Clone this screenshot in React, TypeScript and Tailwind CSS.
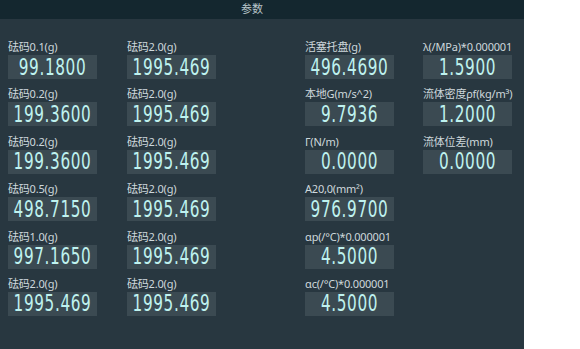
const leftRows = [
  ["砝码0.1(g)", "99.1800", "砝码2.0(g)", "1995.469"],
  ["砝码0.2(g)", "199.3600", "砝码2.0(g)", "1995.469"],
  ["砝码0.2(g)", "199.3600", "砝码2.0(g)", "1995.469"],
  ["砝码0.5(g)", "498.7150", "砝码2.0(g)", "1995.469"],
  ["砝码1.0(g)", "997.1650", "砝码2.0(g)", "1995.469"],
  ["砝码2.0(g)", "1995.469", "砝码2.0(g)", "1995.469"],
];

const rightRows: (string | null)[][] = [
  ["活塞托盘(g)", "496.4690", "λ(/MPa)*0.000001", "1.5900"],
  ["本地G(m/s^2)", "9.7936", "流体密度ρf(kg/m³)", "1.2000"],
  ["Γ(N/m)", "0.0000", "流体位差(mm)", "0.0000"],
  ["A20,0(mm²)", "976.9700", null, null],
  ["αp(/°C)*0.000001", "4.5000", null, null],
  ["αc(/°C)*0.000001", "4.5000", null, null],
];

function Field({ label, value }: { label: string; value: string }) {
  return (
    <div className="flex flex-col">
      <div className="h-[16px] text-[11px] leading-[16px] tracking-[-0.2px] text-[#ced8dc] whitespace-nowrap">{label}</div>
      <div className="h-[24px] w-[89px] bg-[#3b4a52] flex items-center justify-center">
        <span
          className="block text-[17px] leading-none text-[#bff2ef] tracking-[0.6px] scale-y-[1.32] font-light"
          style={{ fontFamily: '"DejaVu Sans Condensed", "DejaVu Sans", sans-serif' }}
        >
          {value}
        </span>
      </div>
    </div>
  );
}

export default function App() {
  return (
    <div
      className="w-[580px] h-[349px] bg-white flex"
      style={{ fontFamily: '"Noto Sans", "Noto Sans CJK SC", sans-serif' }}
    >
      <div className="w-[524px] h-full bg-[#283740] flex flex-col">
        {/* Title bar */}
        <div className="h-[19px] bg-[#14272f] flex items-center justify-center pr-[20px] text-[11px] text-[#b9c6cb]">
          参数
        </div>

        <div className="flex pt-[20px] pl-[8px]">
          {/* Weights */}
          <div className="grid grid-cols-[89px_89px] gap-x-[30px] gap-y-[7.4px]">
            {leftRows.map((r, i) => (
              <>
                <Field key={`a${i}`} label={r[0]} value={r[1]} />
                <Field key={`b${i}`} label={r[2]} value={r[3]} />
              </>
            ))}
          </div>

          {/* Constants */}
          <div className="ml-[89px] grid grid-cols-[89px_89px] gap-x-[29px] gap-y-[7.4px]">
            {rightRows.map((r, i) => (
              <>
                <Field key={`c${i}`} label={r[0]!} value={r[1]!} />
                {r[2] ? <Field key={`d${i}`} label={r[2]} value={r[3]!} /> : <div key={`d${i}`} />}
              </>
            ))}
          </div>
        </div>
      </div>
    </div>
  );
}
